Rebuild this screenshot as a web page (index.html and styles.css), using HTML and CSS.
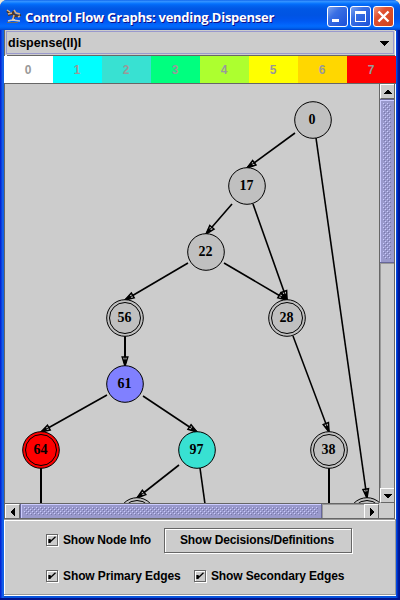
FILE: index.html
```html
<!DOCTYPE html>
<html lang="en">
<head>
<meta charset="utf-8">
<title>Control Flow Graphs</title>
<link rel="stylesheet" href="styles.css">
</head>
<body>
<main class="window">
  <header class="titlebar">
    <svg class="app-icon" width="16" height="16" viewBox="0 0 16 16">
      <path d="M1 3l3 3M2 7l4-1 2-3M7 6l4 2 4-1M9 7l-2 4" fill="none" stroke="#4a3830" stroke-width="2.2"/>
      <path d="M1 2l3 2M2 6l4-1M8 2l2 3 4 1M8 7l-1 4M12 9l2-1" fill="none" stroke="#d8b080" stroke-width="1.5"/>
      <path d="M2 13l4-1 8 1M6 11l3 1" fill="none" stroke="#d0ccc8" stroke-width="1.7"/>
      <path d="M1 14.500h11" stroke="#6b6862"/>
    </svg>
    <h1 class="title">Control Flow Graphs: vending.Dispenser</h1>
    <div class="controls">
      <button class="ctl" aria-label="Minimize"><svg width="19" height="19"><path d="M4 12h7v3H4z" fill="#fff"/></svg></button>
      <button class="ctl" aria-label="Maximize"><svg width="19" height="19"><path d="M4 4h11v11H4zM5 7v7h9V7z" fill="#fff" fill-rule="evenodd"/></svg></button>
      <button class="ctl close" aria-label="Close"><svg width="19" height="19"><path d="M4.500 4.500l10 10M14.500 4.500l-10 10" stroke="#fff" stroke-width="2.4"/></svg></button>
    </div>
  </header>
  <div class="combo"><div class="combo-inner"><span class="combo-text">dispense(II)I</span>
    <svg width="10" height="5" shape-rendering="crispEdges"><path d="M0 0h10L5 5z"/></svg></div></div>
  <div class="legend">
    <span class="c0">0</span><span class="c1">1</span><span class="c2">2</span><span class="c3">3</span><span class="c4">4</span><span class="c5">5</span><span class="c6">6</span><span class="c7">7</span>
  </div>
  <section class="scrollpane">
    <svg class="graph" width="374" height="419" viewBox="5 84 374 419">
      <defs>
        <marker id="arrow" markerUnits="userSpaceOnUse" markerWidth="13" markerHeight="10" refX="11" refY="5" orient="auto">
          <path d="M2 2.200L11 5L2 7.800z" fill="#ccc" stroke="#000" stroke-width="1.500"/><path d="M1 5h10M5 3.500L11 5L5 6.500z" stroke="#000"/>
        </marker>
      </defs>
      <g class="edges">
        <path d="M295 133L247 168"/><path d="M232 204L206 234"/><path d="M188 263L125 300"/>
        <path d="M253 204L287 300"/><path d="M224 263L287 300"/><path class="bold" d="M125 336V366"/>
        <path d="M107 395L41 432"/><path d="M143 396L197 432"/><path d="M293 336L329 432"/>
        <path d="M316 138L367 498"/><path d="M179 465L137 498"/>
      </g>
      <g class="tails"><path d="M41 468V504"/><path d="M329 468V504"/><path class="thin" d="M200 468L205 504"/></g>
      <g class="nodes">
        <circle cx="313" cy="120" r="18.3"/><circle cx="247" cy="186" r="18.3"/><circle cx="206" cy="252" r="18.3"/>
        <circle cx="125" cy="318" r="18.3"/><circle cx="125" cy="318" r="15.5"/>
        <circle cx="287" cy="318" r="18.3"/><circle cx="287" cy="318" r="15.5"/>
        <circle class="blue" cx="125" cy="384" r="18.3"/>
        <circle class="red" cx="41" cy="450" r="18.3"/><circle class="red" cx="41" cy="450" r="15.5"/>
        <circle class="teal" cx="197" cy="450" r="18.3"/>
        <circle cx="329" cy="450" r="18.3"/><circle cx="329" cy="450" r="15.5"/>
        <circle cx="137" cy="516" r="18.3"/><circle cx="137" cy="516" r="15.5"/>
        <circle cx="367" cy="516" r="18.3"/><circle cx="367" cy="516" r="15.5"/>
      </g>
      <g class="labels">
        <text x="312" y="124">0</text><text x="246.500" y="190">17</text><text x="205.500" y="256">22</text>
        <text x="124.500" y="322">56</text><text x="286.500" y="322">28</text><text x="124.500" y="388">61</text>
        <text x="40.500" y="454">64</text><text x="196.500" y="454">97</text><text x="328.500" y="454">38</text>
      </g>
    </svg>
    <div class="vbar">
      <div class="arrow"><svg width="8" height="4" shape-rendering="crispEdges"><path d="M3 0h2L8 4H0z"/></svg></div>
      <div class="thumb vthumb"><i></i></div><div class="track"></div>
      <div class="arrow"><svg width="8" height="4" shape-rendering="crispEdges"><path d="M0 0h8L5 4H3z"/></svg></div>
    </div>
    <div class="hbar">
      <div class="arrow"><svg width="4" height="8" shape-rendering="crispEdges"><path d="M4 0v8L0 5V3z"/></svg></div>
      <div class="thumb hthumb"><i></i></div><div class="track"></div>
      <div class="arrow"><svg width="4" height="8" shape-rendering="crispEdges"><path d="M0 0v8L4 5V3z"/></svg></div>
    </div>
    <div class="corner"></div>
  </section>
  <footer class="options">
    <div class="row first">
      <label class="check"><span class="box"><svg width="8" height="8"><path d="M1 3v4M2 3v4M2 6L7.500 .8" /></svg></span><span class="t1">Show Node Info</span></label>
      <button class="push"><span class="t2">Show Decisions/Definitions</span></button>
    </div>
    <div class="row second">
      <label class="check primary"><span class="box"><svg width="8" height="8"><path d="M1 3v4M2 3v4M2 6L7.500 .8" /></svg></span><span class="t3">Show Primary Edges</span></label>
      <label class="check"><span class="box"><svg width="8" height="8"><path d="M1 3v4M2 3v4M2 6L7.500 .8" /></svg></span><span class="t4">Show Secondary Edges</span></label>
    </div>
  </footer>
</main>
</body>
</html>
```
FILE: styles.css
```css
* { box-sizing: border-box; }
body { margin: 0; background: #ece9d8; overflow: hidden; font: bold 12px "Liberation Sans", Arial, sans-serif; color: #000; }
svg { display: block; }
button { font: inherit; color: inherit; padding: 0; border-radius: 0; }
.window {
  width: 400px; height: 600px; padding: 0 4px 4px; border-radius: 7px 7px 0 0;
  display: flex; flex-direction: column; overflow: hidden;
  background: linear-gradient(90deg, #0019cf 0, #0831d9 1px, #166aee 3px, #0855dd 4px, #0855dd 396px, #003de0 397px, #001ea0 398px, #00138c 400px);
  box-shadow: inset 0 -2px #00138c;
}
.titlebar {
  height: 30px; flex: none; margin: 0 -4px; padding: 0 4px 0 6px; display: flex; align-items: center;
  background: linear-gradient(#0058e6 0, #3a93ff 1px, #288eff 2px, #127dff 3px, #036ffc 4px, #0262ee 6px, #0057e5 9px, #0054e3 15px, #0055eb 19px, #005bf5 22px, #026afe 26px, #0062ef 28px, #0043cf 30px);
}
.app-icon { margin-top: 2px; flex: none; }
.title {
  margin: 4px 0 0 3px; flex: 1; white-space: nowrap; color: #fff; text-shadow: 1px 1px #0f1089;
  font: bold 13px/18px "Open Sans", "Noto Sans", sans-serif; letter-spacing: -.26px;
}
.controls { display: flex; gap: 2px; margin: 3px 2px 0 0; flex: none; }
.ctl {
  width: 21px; height: 21px; border: 1px solid #fff; border-radius: 3px; overflow: hidden;
  background: linear-gradient(135deg, #7ea3ee, #3a70e4 35%, #1c50d8);
}
.ctl.close { background: linear-gradient(135deg, #ef9a80, #e05030 35%, #d0441b); }
.combo { height: 26px; flex: none; padding: 1px; background: #fff; border: 1px solid #666; border-width: 1px 0 0 1px; }
.combo-inner {
  height: 23px; margin: -1px 1px 0 0; padding: 1px 4px 0 1px; display: flex; align-items: center; justify-content: space-between;
  background: #ccc; border: 1px solid #99c; outline: 1px solid #ccc; box-shadow: 1px 2px #666;
}
.combo-text { letter-spacing: .02px; font-size: 12.5px; }
.legend { height: 27px; flex: none; display: grid; grid-template-columns: repeat(8, 49px); line-height: 28px; text-align: center; color: #999; }
.legend span { padding-right: 1px; }
.c0 { background: #fff; } .c1 { background: #0ff; } .c2 { background: #38e1d2; } .c3 { background: #00ff7f; }
.c4 { background: #adff2f; } .c5 { background: #ff0; } .c6 { background: gold; } .c7 { background: red; }
.scrollpane {
  height: 436px; flex: none; display: grid; grid-template: 419px 16px / 374px 16px;
  background: #ccc; border: 1px solid #666; border-width: 1px 0 0 1px; box-shadow: inset -1px 0 #fff;
}
.edges path { fill: none; stroke: #000; stroke-width: 1.6; marker-end: url(#arrow); }
.edges .bold { stroke-width: 2; }
.tails path { stroke: #000; stroke-width: 2; }
.tails .thin { stroke-width: 1.6; }
.nodes circle { fill: silver; stroke: #000; stroke-width: 1; }
.nodes .blue { fill: #8080ff; } .nodes .red { fill: red; } .nodes .teal { fill: #38e1d2; }
.labels text { font: bold 14px "Liberation Serif", "Times New Roman", serif; text-anchor: middle; }
.vbar { display: flex; flex-direction: column; border-left: 1px solid #666; border-right: 1px solid #666; }
.hbar { display: flex; border-top: 1px solid #666; border-bottom: 1px solid #666; }
.arrow { display: grid; place-items: center; flex: 0 0 15px; background: #ccc; border: 1px solid #fff; border-width: 1px 0 0 1px; }
.vbar .arrow { border-bottom: 1px solid #666; }
.hbar .arrow { border-right: 1px solid #666; }
.track { flex: 1; background: #ccc; box-shadow: inset 1px 1px #999; }
.thumb { flex: none; padding: 3px; background: #99c; border: 1px solid #669; box-shadow: inset 1px 1px #ccf; }
.thumb i {
  display: block; width: 100%; height: 100%;
  background: radial-gradient(circle at .5px .5px, #ccf .7px, transparent .8px) 0 0 / 4px 4px,
    radial-gradient(circle at 2.5px 2.5px, #ccf .7px, transparent .8px) 0 0 / 4px 4px,
    radial-gradient(circle at 1.5px 1.5px, #77a .7px, transparent .8px) 0 0 / 4px 4px,
    radial-gradient(circle at 3.5px 3.5px, #77a .7px, transparent .8px) 0 0 / 4px 4px;
}
.vthumb { height: 164px; border-width: 1px 0; }
.hthumb { width: 302px; border-width: 0 1px; }
.corner { border: 1px solid #666; border-width: 0 1px 1px 0; }
.options {
  height: 76px; flex: none; background: #ccc; border: 1px solid #999; border-width: 1px 1px 1px 0;
  padding: 7px 0 0 42px; box-shadow: inset 1px 1px #fff, 0 1px #fff;
}
.row { display: flex; align-items: center; }
.first { height: 26px; }
.first .check { width: 118px; }
.second { height: 20px; margin-top: 13px; }
.second .primary { width: 148px; }
.check { display: flex; align-items: center; gap: 5px; white-space: nowrap; }
.t1 { letter-spacing: -.2px; }
.t2 { letter-spacing: -.13px; }
.t3 { letter-spacing: -.1px; }
.t4 { letter-spacing: -.14px; }
.box { width: 12px; height: 12px; border: 1px solid #666; box-shadow: 1px 1px #fff, inset 1px 1px #fff; display: grid; place-items: center; }
.box path { fill: none; stroke: #000; stroke-width: 1.3; }
.push { width: 188px; height: 25px; background: #ccc; border: 1px solid #666; box-shadow: 1px 1px #fff, inset 1px 1px #fff; white-space: nowrap; padding-right: 2px; }
```
